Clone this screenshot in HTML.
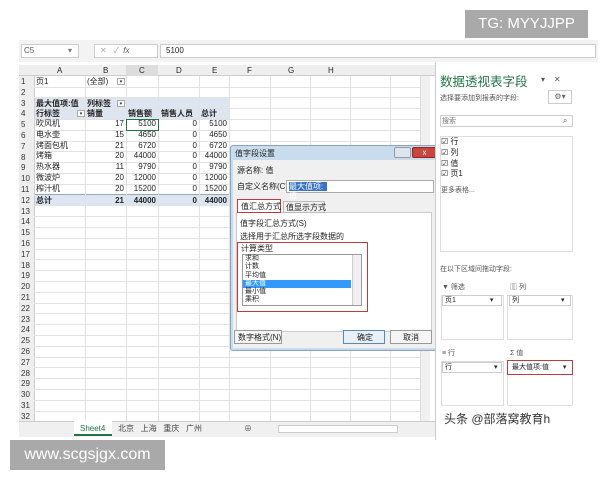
<!DOCTYPE html><html><head><meta charset="utf-8"><style>
*{margin:0;padding:0;box-sizing:border-box}
body{width:600px;height:480px;background:#fff;position:relative;overflow:hidden;font-family:"Liberation Sans","Noto Sans CJK SC",sans-serif;font-size:8px;color:#222}
.a{position:absolute}
.hl{position:absolute;left:34px;width:386px;height:1px;background:#e2e2e2}
.vl{position:absolute;top:76px;width:1px;height:345px;background:#e2e2e2}
.rn{position:absolute;left:19px;width:15px;height:11px;font-size:8px;line-height:11px;text-align:left;padding-left:2px;background:#eee;color:#333}
.t{position:absolute;font-size:8px;line-height:11px;white-space:nowrap}
.r{text-align:right}
.box{position:absolute;border:1px solid #aaa;background:#fff}
</style></head><body>
<div class="a" style="left:19px;top:40px;width:579px;height:22px;background:#f3f3f3"></div>
<div class="box" style="left:21px;top:44px;width:58px;height:14px;border-color:#ccc"></div>
<div class="t" style="left:24px;top:45px;color:#555">C5</div>
<div class="t" style="left:68px;top:45px;color:#777">▾</div>
<div class="box" style="left:94px;top:44px;width:64px;height:14px;border-color:#ccc"></div>
<div class="t" style="left:100px;top:45px;color:#aaa">✕ &nbsp; ✓ &nbsp;<i style="color:#555">fx</i></div>
<div class="box" style="left:160px;top:44px;width:436px;height:14px;border-color:#ccc"></div>
<div class="t" style="left:166px;top:45px">5100</div>
<div class="a" style="left:19px;top:65px;width:416px;height:11px;background:#eee;border-bottom:1px solid #ccc"></div>
<div class="a" style="left:126px;top:65px;width:32px;height:11px;background:#ddd"></div>
<div class="t" style="left:57px;top:65px">A</div><div class="t" style="left:103px;top:65px">B</div><div class="t" style="left:139px;top:65px">C</div><div class="t" style="left:176px;top:65px">D</div><div class="t" style="left:212px;top:65px">E</div><div class="t" style="left:247px;top:65px">F</div><div class="t" style="left:288px;top:65px">G</div><div class="t" style="left:328px;top:65px">H</div>
<div class="a" style="left:34px;top:98px;width:195px;height:22px;background:#dde5f0"></div>
<div class="a" style="left:34px;top:194px;width:195px;height:11px;background:#dde5f0;border-top:1px solid #8ea9cc"></div>
<div class="a" style="left:34px;top:76px;width:1px;height:345px;background:#ccc"></div>
<div id="g"></div>
<div class="vl" style="left:85px"></div><div class="vl" style="left:126px"></div><div class="vl" style="left:158px"></div><div class="vl" style="left:199px"></div><div class="vl" style="left:229px"></div><div class="vl" style="left:270px"></div><div class="vl" style="left:310px"></div><div class="vl" style="left:350px"></div><div class="vl" style="left:390px"></div>
<script>
let h='';for(let i=0;i<32;i++){let y=76+i*10.8;h+=`<div class="rn" style="top:${y}px">${i+1}</div><div class="hl" style="top:${y+10.5}px"></div>`}
document.getElementById('g').outerHTML=h;
</script>
<div class="t" style="left:36px;top:76px">页1</div><div class="t" style="left:87px;top:76px">(全部)</div><div class="box" style="left:117px;top:78px;width:8px;height:7px;font-size:5px;line-height:6px;text-align:center">▾</div>
<div class="t" style="left:36px;top:98px;font-weight:bold">最大值项:值</div><div class="t" style="left:87px;top:98px;font-weight:bold">列标签</div><div class="box" style="left:117px;top:100px;width:8px;height:7px;font-size:5px;line-height:6px;text-align:center">▾</div>
<div class="t" style="left:36px;top:108px;font-weight:bold">行标签</div><div class="box" style="left:77px;top:110px;width:8px;height:7px;font-size:5px;line-height:6px;text-align:center">▾</div><div class="t" style="left:87px;top:108px;font-weight:bold">销量</div><div class="t" style="left:128px;top:108px;font-weight:bold">销售额</div><div class="t" style="left:161px;top:108px;font-weight:bold">销售人员</div><div class="t" style="left:201px;top:108px;font-weight:bold">总计</div>
<div class="a" style="left:126px;top:119px;width:33px;height:12px;border:1.5px solid #217346"></div>
<div class="t" style="left:36px;top:119px;line-height:10.8px">吹风机<br>电水壶<br>烤面包机<br>烤箱<br>热水器<br>微波炉<br>榨汁机</div>
<div class="t r" style="left:100px;top:119px;width:24px;line-height:10.8px">17<br>15<br>21<br>20<br>11<br>20<br>20</div>
<div class="t r" style="left:128px;top:119px;width:28px;line-height:10.8px">5100<br>4650<br>6720<br>44000<br>9790<br>12000<br>15200</div>
<div class="t r" style="left:170px;top:119px;width:27px;line-height:10.8px">0<br>0<br>0<br>0<br>0<br>0<br>0</div>
<div class="t r" style="left:199px;top:119px;width:28px;line-height:10.8px">5100<br>4650<br>6720<br>44000<br>9790<br>12000<br>15200</div>
<div class="t" style="left:36px;top:195px;font-weight:bold">总计</div><div class="t r" style="left:100px;top:195px;width:24px;font-weight:bold">21</div><div class="t r" style="left:128px;top:195px;width:28px;font-weight:bold">44000</div><div class="t r" style="left:170px;top:195px;width:27px;font-weight:bold">0</div><div class="t r" style="left:199px;top:195px;width:28px;font-weight:bold">44000</div>
<div class="a" style="left:420px;top:76px;width:10px;height:345px;background:#f0f0f0;border-left:1px solid #ddd"></div>
<div class="a" style="left:19px;top:421px;width:416px;height:16px;background:#f0f0f0;border-top:1px solid #ccc"></div>
<div class="a" style="left:74px;top:421px;width:38px;height:15px;background:#fff;border-bottom:2px solid #217346"></div>
<div class="t" style="left:80px;top:423px;color:#217346">Sheet4</div>
<div class="t" style="left:118px;top:423px;color:#444">北京 &nbsp;&nbsp;上海 &nbsp;&nbsp;重庆 &nbsp;&nbsp;广州</div>
<div class="t" style="left:244px;top:423px;color:#555">⊕</div>
<div class="box" style="left:278px;top:425px;width:120px;height:8px;border-color:#ccc"></div>
<div class="a" style="left:230px;top:145px;width:210px;height:206px;background:#c9dcee;border:1px solid #8aa3bd;border-radius:3px"></div>
<div class="t" style="left:235px;top:148px">值字段设置</div>
<div class="a" style="left:394px;top:147px;width:17px;height:11px;background:#dde6ef;border:1px solid #999;border-radius:2px"></div>
<div class="a" style="left:412px;top:147px;width:25px;height:11px;background:#c8463c;border:1px solid #922;border-radius:2px;color:#fff;font-size:8px;text-align:center;line-height:9px">x</div>
<div class="a" style="left:233px;top:160px;width:204px;height:188px;background:#f0f0f0"></div>
<div class="t" style="left:237px;top:165px">源名称: 值</div>
<div class="t" style="left:237px;top:181px">自定义名称(C):</div>
<div class="box" style="left:286px;top:180px;width:148px;height:13px;border-color:#aaa"></div>
<div class="a" style="left:289px;top:182px;width:38px;height:9px;background:#3b73c4;color:#fff;font-size:8px;line-height:9px">最大值项:值</div>
<div class="a" style="left:236px;top:212px;width:196px;height:120px;background:#fff;border:1px solid #ccc"></div>
<div class="a" style="left:237px;top:199px;width:44px;height:14px;background:#fff;border:1.5px solid #c0393b"></div>
<div class="t" style="left:241px;top:201px">值汇总方式</div>
<div class="a" style="left:283px;top:201px;width:42px;height:12px;background:#f0f0f0;border:1px solid #bbb"></div>
<div class="t" style="left:286px;top:202px">值显示方式</div>
<div class="t" style="left:240px;top:218px">值字段汇总方式(S)</div>
<div class="t" style="left:240px;top:231px">选择用于汇总所选字段数据的</div>
<div class="a" style="left:237px;top:242px;width:131px;height:70px;border:1.5px solid #c0393b"></div>
<div class="t" style="left:241px;top:243px">计算类型</div>
<div class="box" style="left:242px;top:254px;width:120px;height:52px;border-color:#999"></div>
<div class="a" style="left:352px;top:255px;width:9px;height:50px;background:#f0f0f0;border-left:1px solid #ccc"></div>
<div class="a" style="left:243px;top:280px;width:108px;height:8px;background:#3399ff"></div>
<div class="t" style="left:245px;top:255px;line-height:8.3px;font-size:7px">求和<br>计数<br>平均值<br><span style="color:#fff">最大值</span><br>最小值<br>乘积</div>
<div class="box" style="left:234px;top:330px;width:48px;height:14px;border-color:#999;background:#f5f5f5"></div><div class="t" style="left:238px;top:332px">数字格式(N)</div>
<div class="box" style="left:343px;top:330px;width:42px;height:14px;border-color:#5a88b8;background:#e8f0f8"></div><div class="t" style="left:357px;top:332px">确定</div>
<div class="box" style="left:390px;top:330px;width:42px;height:14px;border-color:#999;background:#f5f5f5"></div><div class="t" style="left:403px;top:332px">取消</div>
<div class="a" style="left:435px;top:62px;width:163px;height:378px;background:#fff;border-left:1px solid #ccc"></div>
<div class="a" style="left:440px;top:71px;font-size:12.5px;color:#217346">数据透视表字段</div>
<div class="t" style="left:541px;top:74px;color:#555">▾ &nbsp;&nbsp;&nbsp;✕</div>
<div class="t" style="left:440px;top:93px;font-size:7px;color:#555">选择要添加到报表的字段:</div>
<div class="box" style="left:548px;top:90px;width:24px;height:14px;border-color:#ccc;color:#666;text-align:center;line-height:12px">⚙▾</div>
<div class="box" style="left:440px;top:115px;width:133px;height:12px;border-color:#ccc"></div><div class="t" style="left:442px;top:116px;font-size:7px;color:#777">搜索</div><div class="t" style="left:563px;top:115px;color:#555">⌕</div>
<div class="box" style="left:440px;top:136px;width:133px;height:116px;border-color:#ddd"></div>
<div class="t" style="left:441px;top:137px;line-height:10.8px">☑ 行<br>☑ 列<br>☑ 值<br>☑ 页1</div>
<div class="t" style="left:441px;top:185px;font-size:7px;color:#555">更多表格...</div>
<div class="t" style="left:440px;top:264px;font-size:7px;color:#555">在以下区域间拖动字段:</div>
<div class="t" style="left:442px;top:282px;font-size:7px;color:#555">▼ 筛选</div><div class="t" style="left:510px;top:282px;font-size:7px;color:#555">▥ 列</div>
<div class="box" style="left:441px;top:295px;width:63px;height:45px;border-color:#ddd"></div><div class="box" style="left:507px;top:295px;width:66px;height:45px;border-color:#ddd"></div>
<div class="box" style="left:442px;top:295px;width:60px;height:11px;border-color:#ccc"></div><div class="t" style="left:445px;top:295px;font-size:7px">页1 <span style="margin-left:32px">▾</span></div>
<div class="box" style="left:509px;top:295px;width:62px;height:11px;border-color:#ccc"></div><div class="t" style="left:512px;top:295px;font-size:7px">列 <span style="margin-left:40px">▾</span></div>
<div class="t" style="left:442px;top:348px;font-size:7px;color:#555">≡ 行</div><div class="t" style="left:510px;top:348px;font-size:7px;color:#555">Σ 值</div>
<div class="box" style="left:441px;top:361px;width:63px;height:45px;border-color:#ddd"></div><div class="box" style="left:507px;top:361px;width:66px;height:45px;border-color:#ddd"></div>
<div class="box" style="left:442px;top:362px;width:60px;height:11px;border-color:#ccc"></div><div class="t" style="left:445px;top:362px;font-size:7px">行 <span style="margin-left:40px">▾</span></div>
<div class="a" style="left:507px;top:360px;width:66px;height:15px;border:1.5px solid #c0393b;background:#fff"></div><div class="t" style="left:512px;top:362px;font-size:7px">最大值项:值 <span style="margin-left:12px">▾</span></div>
<div class="a" style="left:444px;top:410px;font-size:12px;color:#333;text-shadow:0 0 2px #fff">头条 @部落窝教育h</div>
<div class="a" style="left:465px;top:10px;width:123px;height:28px;background:#a9a9a9;color:#fff;font-size:15px;line-height:28px;text-align:center">TG: MYYJJPP</div>
<div class="a" style="left:10px;top:440px;width:155px;height:30px;background:#a9a9a9;color:#fff;font-size:16px;line-height:30px;text-align:center">www.scgsjgx.com</div>
</body></html>
